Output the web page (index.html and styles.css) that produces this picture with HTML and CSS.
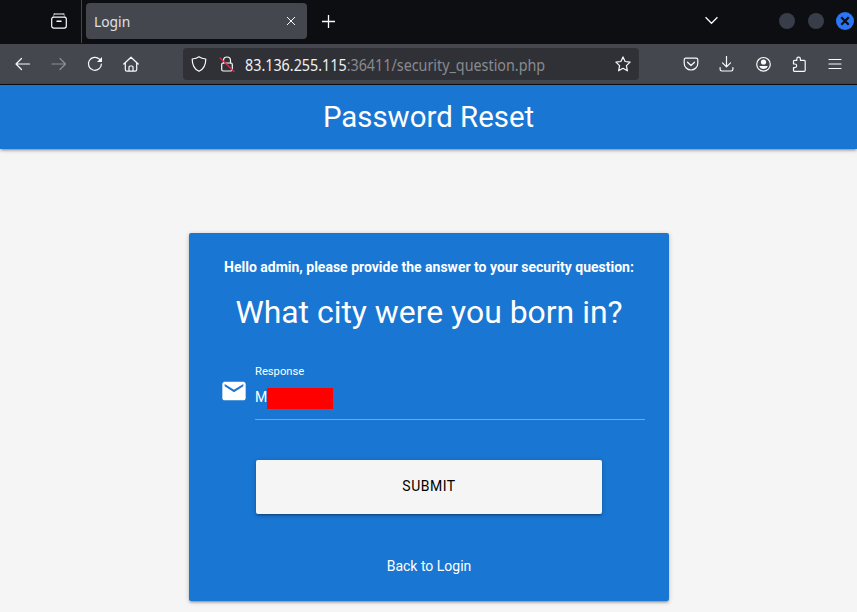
FILE: index.html
```html
<!DOCTYPE html>
<html lang="en">
<head>
<meta charset="utf-8">
<title>Login</title>
<link rel="stylesheet" href="styles.css">
</head>
<body>
<header class="browser">
  <div class="tabbar">
    <div class="recent"><svg class="icon" viewBox="0 0 16 16"><path d="M3 1h10" /><rect x=".7" y="4.2" width="14.6" height="10.9" rx="2"/><path d="M2 4.2Q2.3 2.6 3.5 1M14 4.2Q13.7 2.6 12.5 1" opacity=".4"/><path d="M6 8.3h4" stroke-width="1.5"/></svg></div>
    <div class="tab"><span class="tab-title">Login</span><svg class="tab-close" viewBox="0 0 10 10"><path d="M1 1l8 8M9 1L1 9"/></svg></div>
    <div class="new-tab"><svg viewBox="0 0 12 12"><path d="M6 0v12M0 6h12"/></svg></div>
    <div class="all-tabs"><svg viewBox="0 0 12 8"><path d="M.5 1L6 6.5 11.5 1"/></svg></div>
    <div class="window-buttons">
      <span class="win"></span><span class="win"></span>
      <span class="win win-close"><svg viewBox="0 0 8 8"><path d="M1 1l6 6M7 1L1 7"/></svg></span>
    </div>
  </div>
  <div class="toolbar">
    <div class="tool"><svg class="icon" viewBox="0 0 16 16"><path d="M14.500 8H1.200M6.500 2.500L1 8l5.500 5.500"/></svg></div>
    <div class="tool disabled"><svg class="icon" viewBox="0 0 16 16"><path d="M1 8h13.500M9 2.500L14.500 8 9 13.500"/></svg></div>
    <div class="tool"><svg class="icon" viewBox="0 0 16 16"><path d="M14.400 8A6.500 6.500 0 1 1 12.500 3.200L14 4.700"/><path class="solid" d="M15 1v5h-5z"/></svg></div>
    <div class="tool"><svg class="icon home" viewBox="0 0 16 16"><path d="M.8 8L8 1.200 15.200 8M2.300 7v6.600q0 1.600 1.600 1.600h8.200q1.600 0 1.600-1.600V7M6 15v-4q0-1 1-1h2q1 0 1 1v4"/></svg></div>
    <div class="urlbar">
      <svg class="icon shield" viewBox="0 0 16 16"><path d="M8 .8C6 2.300 3.500 2.800 1.200 3c0 6 1.500 10 6.800 12.300C13.300 13 14.800 9 14.800 3 12.500 2.800 10 2.300 8 .8z"/></svg>
      <svg class="icon lock" viewBox="0 0 16 16"><path d="M4.500 7V4.500a3.500 3.500 0 0 1 7 0V7"/><rect x="2.700" y="7" width="10.600" height="8" rx="1.500"/><path class="slash" d="M1 2l14 13.500"/></svg>
      <span class="url"><span class="host">83.136.255.115</span>:36411/security_question.php</span>
      <svg class="icon star" viewBox="0 0 16 16"><path d="M8 .9l2.100 4.600 5 .6-3.700 3.500 1 5.200L8 12.300l-4.400 2.500 1-5.200L.9 6.100l5-.6z"/></svg>
    </div>
    <div class="tool"><svg class="icon" viewBox="0 0 16 16"><path d="M2.800 2.200h10.400q1.600 0 1.600 1.600v3.400a6.800 6.800 0 0 1-13.600 0V3.800q0-1.600 1.600-1.600zM4.500 6.200L8 9.500l3.500-3.300"/></svg></div>
    <div class="tool"><svg class="icon" viewBox="0 0 16 16"><path d="M7.500 .3v10.200M3.500 6.800l4 4 4-4M1.100 11.500v1.800q0 1.700 1.700 1.700h9.400q1.700 0 1.700-1.700v-1.800"/></svg></div>
    <div class="tool"><svg class="icon" viewBox="0 0 16 16"><circle cx="8.500" cy="8.300" r="6.800"/><circle class="solid" cx="8.500" cy="6" r="2.600"/><path class="solid" d="M4.300 10h8.400c-.5 2-2.200 3-4.200 3s-3.700-1-4.200-3z"/></svg></div>
    <div class="tool"><svg class="icon" viewBox="0 0 16 16"><path d="M2.500 8V5.300q0-1 1-1h2.300V3a1.800 1.800 0 0 1 3.600 0v1.300h3.800q1 0 1 1v9q0 1-1 1H3.500q-1 0-1-1v-2.600h1.300a1.800 1.800 0 0 0 0-3.700z"/></svg></div>
    <div class="tool"><svg class="icon" viewBox="0 0 16 16"><path d="M2 3.500h12M2 8h12M2 12.500h12"/></svg></div>
  </div>
</header>
<nav class="page-nav">Password Reset</nav>
<main>
  <form class="card">
    <p class="greeting">Hello admin, please provide the answer to your security question:</p>
    <h4 class="question">What city were you born in?</h4>
    <div class="field">
      <svg class="mail" viewBox="0 0 24 24"><path d="M20 4H4c-1.100 0-2 .9-2 2v12c0 1.100.9 2 2 2h16c1.100 0 2-.9 2-2V6c0-1.100-.9-2-2-2zm0 4l-8 5-8-5V6l8 5 8-5v2z"/></svg>
      <div class="input">
        <div class="label">Response</div>
        <div class="value">M<span class="redaction"></span></div>
      </div>
    </div>
    <div class="submit">SUBMIT</div>
    <div class="back">Back to Login</div>
  </form>
</main>
</body>
</html>
```
FILE: styles.css
```css
* { box-sizing: border-box; }
body {
  margin: 0;
  height: 612px;
  overflow: hidden;
  background: #f5f5f5;
  font-family: Roboto, sans-serif;
  font-size: 14px;
  color: #fff;
}
svg { display: block; flex: none; fill: none; stroke: #fbfbfe; stroke-width: 1.2; }
.icon { width: 16px; height: 16px; stroke-linecap: round; stroke-linejoin: round; }
.solid { fill: #fbfbfe; stroke: none; }

.browser { font-family: "Noto Sans", sans-serif; color: #e0e0e4; }
.tabbar { display: flex; height: 44px; background: #0d0e11; }
.recent { width: 82px; height: 43px; padding: 13px 0 0 51px; border-right: 1px solid #45474e; }
.tab {
  display: flex; align-items: center; justify-content: space-between;
  width: 221px; height: 36px; margin: 3px 0 0 4px; padding: 0 11px 0 8px;
  border-radius: 4px; background: #45474e;
}
.tab-title { font-size: 14.700px; line-height: 20px; transform: scaleX(.94); transform-origin: left; }
.tab-close { width: 10px; height: 10px; stroke-width: 1; }
.new-tab { margin: 15px 0 0 15px; }
.new-tab svg { width: 13px; height: 13px; }
.all-tabs { margin: 16px 0 0 370px; }
.all-tabs svg { width: 13px; height: 9px; }
.window-buttons { display: flex; align-items: center; gap: 13px; height: 42px; margin-left: 61px; }
.win { width: 16px; height: 16px; border-radius: 50%; background: #383d4a; }
.win-close { display: flex; align-items: center; justify-content: center; width: 18px; height: 18px; margin-left: -1px; background: #2a77f5; }
.win-close svg { width: 10px; height: 10px; stroke: #0d0e11; stroke-width: 1.8; }

.toolbar {
  display: flex; align-items: center; height: 41px; padding: 0 4px 0 5px;
  background: #45474e; border-bottom: 1px solid #0d0e11;
}
.tool { display: flex; justify-content: center; width: 36px; }
.home { margin-right: 1px; }
.disabled { opacity: .4; }
.urlbar {
  display: flex; align-items: center; width: 456px; height: 32px;
  margin: 0 34px; padding: 0 8px; border-radius: 4px; background: #303136;
}
.lock { margin-left: 12px; }
.slash { stroke: #e22850; }
.url {
  flex: 1; margin: 1px 0 0 10px; font-size: 15.500px; line-height: 22px; color: #898a8f;
  white-space: nowrap; transform: scaleX(.924); transform-origin: left;
}
.host { color: #f0f0f4; }

.page-nav {
  height: 64px; background: #1976d2; text-align: center;
  font-size: 29.400px; line-height: 64px;
  box-shadow: 0 2px 2px 0 rgba(0,0,0,.14), 0 3px 1px -2px rgba(0,0,0,.12), 0 1px 5px 0 rgba(0,0,0,.2);
}
.card {
  width: 480px; height: 368px; margin: 84px auto 0 189px; padding: 24px;
  background: #1976d2; border-radius: 2px; text-align: center;
  box-shadow: 0 2px 2px 0 rgba(0,0,0,.14), 0 3px 1px -2px rgba(0,0,0,.12), 0 1px 5px 0 rgba(0,0,0,.2);
}
.greeting { margin: 0; font-weight: 700; line-height: 21px; }
.question { margin: 17px 0 0; font-size: 31.920px; font-weight: 400; line-height: 35px; }
.field { display: flex; height: 90px; margin-top: 33px; padding-left: 7px; text-align: left; }
.mail { width: 28px; height: 28px; margin: 13.500px 0 0; fill: #fff; stroke: none; }
.input { width: 390px; height: 57px; margin-left: 7px; border-bottom: 1px solid #9e9e9e; }
.label { padding-top: 1px; font-size: 11.200px; line-height: 16px; }
.value { display: flex; align-items: center; height: 37px; padding-bottom: 4px; }
.redaction { width: 66px; height: 21px; margin-top: 3px; background: #f00; }
.submit {
  width: 346px; height: 54px; margin: 7px 0 0 43px; border-radius: 2px;
  background: #f5f5f5; color: #000; line-height: 52px; letter-spacing: .5px;
  box-shadow: 0 2px 2px 0 rgba(0,0,0,.14), 0 3px 1px -2px rgba(0,0,0,.12), 0 1px 5px 0 rgba(0,0,0,.2);
}
.back { margin-top: 42px; line-height: 21px; }
```
